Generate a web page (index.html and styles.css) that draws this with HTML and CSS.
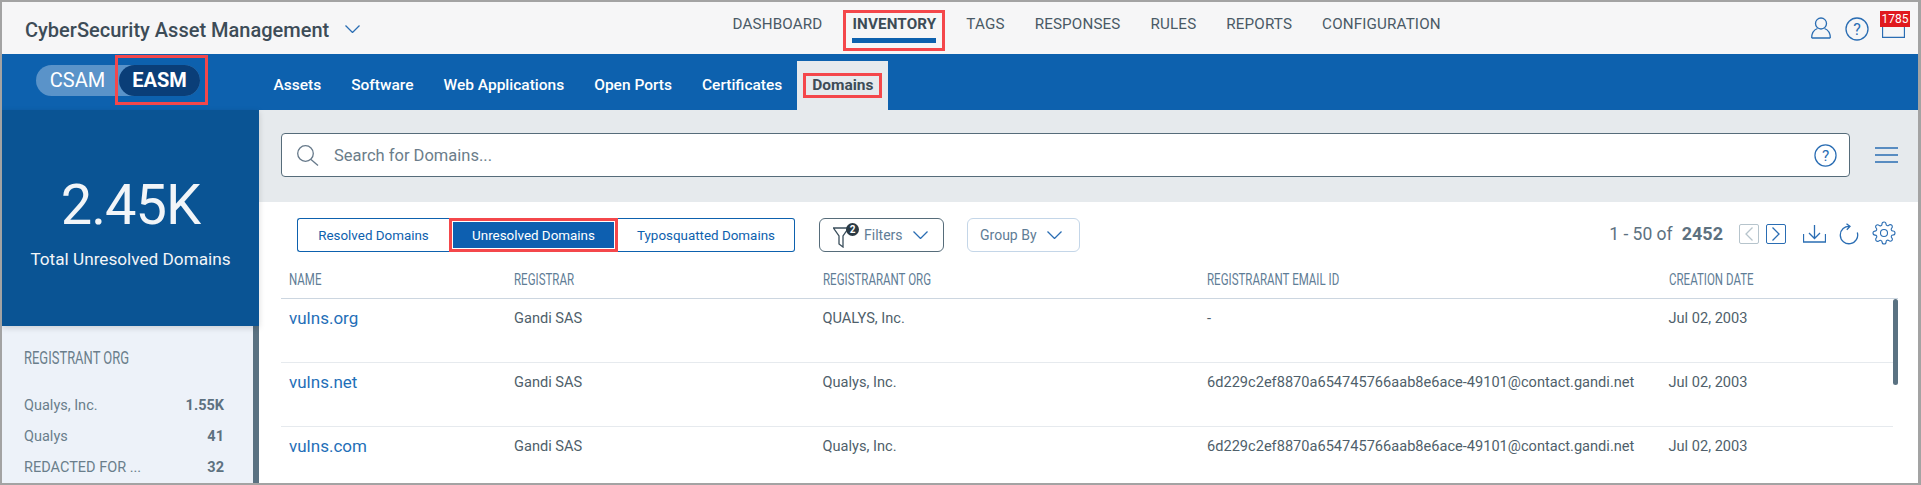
FILE: index.html
```html
<!DOCTYPE html>
<html lang="en">
<head>
<meta charset="utf-8">
<title>CyberSecurity Asset Management</title>
<link rel="stylesheet" href="styles.css">
</head>
<body>
<div class="frame">
  <header class="topbar">
    <div class="brand">
      <span class="brand-name">CyberSecurity Asset Management</span>
      <svg class="brand-chev" width="15" height="8" viewBox="0 0 15 8"><path d="M.5.5l7 7 7-7" class="ic"/></svg>
    </div>
    <nav class="mainnav">
      <a class="mainnav-item">DASHBOARD</a>
      <a class="mainnav-item mainnav-active">INVENTORY</a>
      <a class="mainnav-item">TAGS</a>
      <a class="mainnav-item">RESPONSES</a>
      <a class="mainnav-item">RULES</a>
      <a class="mainnav-item">REPORTS</a>
      <a class="mainnav-item">CONFIGURATION</a>
    </nav>
    <div class="top-icons">
      <svg width="20" height="22" viewBox="0 0 20 22"><circle cx="10" cy="6.5" r="5.5" class="ic"/><path d="M.7 21c0-6 3-8.500 5.800-9.500M19.300 21c0-6-3-8.500-5.800-9.500M.7 21h18.600" class="ic"/></svg>
      <svg width="24" height="24" viewBox="0 0 24 24"><circle cx="12" cy="12" r="11" class="ic"/><text x="12" y="17.500" class="help-mark">?</text></svg>
      <div class="mail">
        <svg width="23" height="18" viewBox="0 0 23 18"><path d="M.5.5h22v17H.5zM10 6h2" class="ic"/></svg>
        <span class="mail-badge">1785</span>
      </div>
    </div>
  </header>

  <div class="subbar">
    <div class="toggle-wrap">
      <div class="toggle">
        <span class="toggle-off">CSAM</span>
        <span class="toggle-on">EASM</span>
      </div>
    </div>
    <nav class="subnav">
      <a class="subnav-item">Assets</a>
      <a class="subnav-item">Software</a>
      <a class="subnav-item">Web Applications</a>
      <a class="subnav-item">Open Ports</a>
      <a class="subnav-item">Certificates</a>
      <a class="subnav-tab"><span class="subnav-tab-label">Domains</span></a>
    </nav>
  </div>

  <div class="main">
    <aside class="side">
      <div class="total">
        <div class="total-num">2.45K</div>
        <div class="total-label">Total Unresolved Domains</div>
      </div>
      <div class="facet">
        <div class="facet-body">
          <div class="facet-title"><span class="cond">REGISTRANT ORG</span></div>
          <div class="facet-row"><span>Qualys, Inc.</span><b>1.55K</b></div>
          <div class="facet-row"><span>Qualys</span><b>41</b></div>
          <div class="facet-row"><span>REDACTED FOR ...</span><b>32</b></div>
        </div>
        <div class="facet-scroll"></div>
      </div>
    </aside>

    <section class="content">
      <div class="search-band">
        <div class="search">
          <svg width="22" height="21" viewBox="0 0 22 21"><circle cx="8.500" cy="8.500" r="7.800" class="ic-grey"/><path d="M14 14.500l7 6" class="ic-grey"/></svg>
          <span class="search-text">Search for Domains...</span>
          <svg class="search-help" width="23" height="23" viewBox="0 0 24 24"><circle cx="12" cy="12" r="11" class="ic"/><text x="12" y="17.500" class="help-mark">?</text></svg>
        </div>
        <svg class="burger" width="23" height="16" viewBox="0 0 23 16"><path d="M0 1h23M0 8h23M0 15h23" class="ic"/></svg>
      </div>

      <div class="toolbar">
        <div class="seg">
          <span class="seg-item seg-first">Resolved Domains</span>
          <span class="seg-item seg-active">Unresolved Domains</span>
          <span class="seg-item seg-last">Typosquatted Domains</span>
        </div>
        <button class="btn btn-filter">
          <span class="funnel">
            <svg width="16" height="21" viewBox="0 0 16 21"><path d="M.5 1h15L10 9v11l-4-3V9z" class="ic-dark"/></svg>
            <span class="funnel-badge">2</span>
          </span>
          <span>Filters</span>
          <svg width="15" height="8" viewBox="0 0 15 8"><path d="M.5.5l7 7 7-7" class="ic"/></svg>
        </button>
        <button class="btn btn-group">
          <span>Group By</span>
          <svg width="15" height="8" viewBox="0 0 15 8"><path d="M.5.5l7 7 7-7" class="ic"/></svg>
        </button>
        <div class="pager">
          <span class="pager-text">1 - 50 of</span>
          <b class="pager-total">2452</b>
          <span class="page-btn page-off"><svg width="8" height="14" viewBox="0 0 8 14"><path d="M7.500.5L1 7l6.500 6.500" class="ic-off"/></svg></span>
          <span class="page-btn page-on"><svg width="8" height="14" viewBox="0 0 8 14"><path d="M.5.5L7 7 .5 13.500" class="ic"/></svg></span>
          <svg class="tool-down" width="23" height="18" viewBox="0 0 23 18"><path d="M11.500 0v13M6 8l5.500 5.500L17 8M.5 9v8h22V9" class="ic"/></svg>
          <svg class="tool-refresh" width="20" height="22" viewBox="0 0 20 22"><path d="M18.300 9.500A8.700 8.700 0 1 1 11 3.400M7.500 .7L11 3.400 7.800 6.700" class="ic"/></svg>
          <svg class="tool-gear" width="24" height="24" viewBox="0 0 24 24"><circle cx="12" cy="12" r="3.500" class="ic-thin"/><path d="M19.400 15a1.650 1.650 0 0 0 .33 1.820l.06.06a2 2 0 0 1 0 2.830 2 2 0 0 1-2.830 0l-.06-.06a1.650 1.650 0 0 0-1.820-.33 1.650 1.650 0 0 0-1 1.510V21a2 2 0 0 1-2 2 2 2 0 0 1-2-2v-.09A1.650 1.650 0 0 0 9 19.400a1.650 1.650 0 0 0-1.820.33l-.06.06a2 2 0 0 1-2.830 0 2 2 0 0 1 0-2.830l.06-.06a1.650 1.650 0 0 0 .33-1.820 1.650 1.650 0 0 0-1.510-1H3a2 2 0 0 1-2-2 2 2 0 0 1 2-2h.09A1.650 1.650 0 0 0 4.600 9a1.650 1.650 0 0 0-.33-1.820l-.06-.06a2 2 0 0 1 0-2.830 2 2 0 0 1 2.830 0l.06.06a1.650 1.650 0 0 0 1.820.33H9a1.650 1.650 0 0 0 1-1.510V3a2 2 0 0 1 2-2 2 2 0 0 1 2 2v.09a1.650 1.650 0 0 0 1 1.510 1.650 1.650 0 0 0 1.820-.33l.06-.06a2 2 0 0 1 2.830 0 2 2 0 0 1 0 2.830l-.06.06a1.650 1.650 0 0 0-.33 1.820V9a1.650 1.650 0 0 0 1.510 1H21a2 2 0 0 1 2 2 2 2 0 0 1-2 2h-.09a1.650 1.650 0 0 0-1.510 1z" class="ic-thin"/></svg>
        </div>
      </div>

      <div class="table">
        <div class="thead">
          <span class="cond">NAME</span><span class="cond">REGISTRAR</span><span class="cond">REGISTRARANT ORG</span><span class="cond">REGISTRARANT EMAIL ID</span><span class="cond">CREATION DATE</span>
        </div>
        <div class="tbody">
          <div class="rows">
            <div class="row"><a class="link">vulns.org</a><span>Gandi SAS</span><span>QUALYS, Inc.</span><span>-</span><span>Jul 02, 2003</span></div>
            <div class="row"><a class="link">vulns.net</a><span>Gandi SAS</span><span>Qualys, Inc.</span><span>6d229c2ef8870a654745766aab8e6ace-49101@contact.gandi.net</span><span>Jul 02, 2003</span></div>
            <div class="row"><a class="link">vulns.com</a><span>Gandi SAS</span><span>Qualys, Inc.</span><span>6d229c2ef8870a654745766aab8e6ace-49101@contact.gandi.net</span><span>Jul 02, 2003</span></div>
          </div>
          <div class="thumb"></div>
        </div>
      </div>
    </section>
  </div>
</div>
</body>
</html>
```
FILE: styles.css
```css
*, *::before, *::after { box-sizing: border-box; }
html, body { margin: 0; padding: 0; }
body { font-family: Roboto, "Liberation Sans", sans-serif; color: #4a5a66; background: #fff; }

.frame {
  width: 1921px; height: 485px; overflow: hidden;
  border: solid #a3a3a3; border-width: 2px 3px 2px 2px;
  display: flex; flex-direction: column;
  background: #fff;
}

/* no condensed face is installed, so the narrow caption font is made by squeezing Roboto */
.cond { display: inline-block; transform: scaleX(.72); transform-origin: left center; white-space: nowrap; }

.ic, .ic-grey, .ic-dark, .ic-off, .ic-thin { fill: none; stroke-width: 1.3; }
.ic { stroke: #2a6db3; }
.ic-thin { stroke: #2a6db3; stroke-width: 1.1; }
.ic-grey { stroke: #66798a; }
.ic-dark { stroke: #3b4f5c; }
.ic-off { stroke: #b6c4cc; }
.help-mark { font: 16px Roboto, sans-serif; text-anchor: middle; fill: #2a6db3; }

/* top bar */
.topbar { height: 52px; flex: none; background: #f6f6f7; display: flex; align-items: stretch; }
.brand { width: 730.500px; padding: 16px 0 0 23px; display: flex; gap: 16px; flex: none; }
.brand-name { font-size: 20px; font-weight: 500; line-height: 24px; color: #3d4c57; white-space: nowrap; }
.brand-chev { margin-top: 7px; }
.mainnav { display: flex; align-items: flex-start; gap: 30px; font-size: 15.200px; flex: none; }
.mainnav-item { color: #4a5a66; padding-top: 13px; line-height: 18px; letter-spacing: .15px; }
.mainnav-active {
  font-weight: 700; color: #3c4b56;
  margin: 8px -9px 0; padding: 5px 9px 0; height: 41px;
  outline: 3px solid #f4474b; outline-offset: -3px;
}
.mainnav-active::after { content: ""; display: block; height: 5px; background: #0d61ae; margin-top: 5px; }
.top-icons { margin-left: auto; width: 107px; padding-top: 15px; display: flex; align-items: flex-start; gap: 14px; }
.mail { position: relative; margin-top: 3px; margin-left: -1px; }
.mail svg { display: block; }
.mail-badge {
  position: absolute; left: -2px; top: -9px; width: 30px; height: 16px;
  background: #e0191e; color: #fff; font-size: 12px; line-height: 16px; text-align: center;
}

/* sub bar */
.subbar { height: 56px; flex: none; background: #0d61ae; display: flex; }
.toggle-wrap { width: 271.500px; flex: none; padding: 11px 0 0 34px; }
.toggle { width: 164px; height: 31px; border-radius: 16px; background: #5a93c9; display: flex; color: #fff; font-size: 20px; }
.toggle-off { width: 83px; text-align: center; line-height: 31px; }
.toggle-on {
  width: 81px; height: 31px; line-height: 31px; text-align: center; font-weight: 700;
  background: #0a3e78; border-radius: 16px; position: relative;
}
.toggle-on::after { content: ""; position: absolute; left: -4px; top: -10px; width: 93px; height: 50px; border: 3px solid #f4474b; }
.subnav { display: flex; font-size: 15.500px; font-weight: 500; color: #fff; align-items: stretch; }
.subnav-item { padding: 0 15px; line-height: 62px; white-space: nowrap; }
.subnav-item:first-child { padding-left: 0; }
.subnav-tab { margin-top: 7px; width: 91px; background: #e6eaed; display: flex; align-items: center; justify-content: center; }
.subnav-tab-label { color: #3d4c57; font-weight: 700; width: 79px; height: 25px; line-height: 25px; text-align: center; outline: 3px solid #f4474b; outline-offset: -3px; }

/* main */
.main { flex: 1; display: flex; min-height: 0; }
.side { width: 257px; flex: none; display: flex; flex-direction: column; }
.total { height: 216px; flex: none; background: #0a5494; color: #fff; text-align: center; padding-top: 63px; box-shadow: 0 2px 6px rgba(0,0,0,.15); position: relative; }
.total-num { font-size: 56px; font-weight: 400; letter-spacing: -1px; line-height: 64px; color: #f2f5f8; }
.total-label { font-size: 17.200px; font-weight: 400; margin-top: 12px; line-height: 20px; color: #f2f5f8; }
.facet { flex: 1; background: #edf2f9; display: flex; }
.facet-body { flex: 1; padding: 20px 29px 0 22px; }
.facet-title { font-size: 18px; color: #6a7e8b; line-height: 24px; margin-bottom: 20px; white-space: nowrap; }
.facet-row { display: flex; justify-content: space-between; font-size: 14.500px; line-height: 31px; height: 31px; color: #6a7e8b; white-space: nowrap; }
.facet-row b { font-weight: 700; color: #5d7180; }
.facet-scroll { width: 6px; background: #5a7282; flex: none; }

.content { flex: 1; min-width: 0; display: flex; flex-direction: column; }
.search-band { height: 92px; flex: none; background: #e6eaed; padding: 23px 0 0 22px; display: flex; align-items: flex-start; gap: 25px; }
.search {
  width: 1569px; height: 44px; background: #fff; border: 1px solid #566c7a; border-radius: 4px;
  display: flex; align-items: center; padding: 0 12px 0 15px;
}
.search-text { margin-left: 15px; font-size: 16.500px; color: #6b7d8a; }
.search-help { margin-left: auto; }
.burger { margin-top: 14px; }

.toolbar { height: 50px; flex: none; display: flex; align-items: flex-start; padding: 16px 22px 0 38px; }
.seg { display: flex; height: 34px; font-size: 13.400px; color: #0d61ae; width: 498px; }
.seg-item { display: flex; align-items: center; justify-content: center; border: 1px solid #0d61ae; border-width: 1px 0; }
.seg-first { width: 152px; border-left-width: 1px; border-radius: 3px 0 0 3px; }
.seg-active { width: 169px; background: #0d5fb0; color: #fff; border: 3px solid #f4474b; box-shadow: inset 0 0 0 1px #fff; }
.seg-last { flex: 1; border-right-width: 1px; border-radius: 0 3px 3px 0; }
.btn { height: 34px; font: inherit; font-size: 14px; color: #5f7d96; background: #fff; border-radius: 6px; display: flex; align-items: center; padding: 0; }
.btn-filter { width: 125px; margin-left: 24px; border: 1px solid #566c7a; padding-left: 13px; gap: 10px; }
.btn-group { width: 113px; margin-left: 23px; border: 1px solid #c4d6e8; padding-left: 12px; gap: 10px; }
.funnel { position: relative; display: block; width: 21px; height: 21px; margin-top: 4px; }
.funnel svg { display: block; }
.funnel-badge {
  position: absolute; left: 13px; top: -4px; width: 13px; height: 13px; border-radius: 50%;
  background: #2b3a44; color: #fff; font-size: 10px; font-weight: 700; line-height: 13px; text-align: center;
}
.pager { margin-left: auto; display: flex; align-items: center; height: 31px; color: #5d7180; }
.pager-text { font-size: 17.500px; }
.pager-total { font-size: 18px; margin-left: 9px; font-weight: 700; }
.page-btn { width: 20px; height: 20px; border: 1px solid; border-radius: 2px; display: flex; align-items: center; justify-content: center; }
.page-off { margin-left: 16px; border-color: #b6c4cc; }
.page-on { margin-left: 7px; border-color: #2a6db3; }
.tool-down { margin-left: 17px; }
.tool-refresh { margin-left: 13px; }
.tool-gear { margin-left: 13px; margin-top: -2px; }

.table { flex: 1; min-height: 0; padding-left: 22px; }
.thead {
  display: grid; grid-template-columns: 225px 308.500px 384.500px 461.500px 1fr;
  height: 47px; width: 1617px; padding: 8px 0 0 8px; align-items: center;
  border-bottom: 1px solid #ccd6e0;
  font-size: 16px; color: #5f7d96;
  white-space: nowrap;
}
.tbody { display: flex; width: 1617px; }
.rows { width: 1612px; flex: none; }
.row {
  display: grid; grid-template-columns: 225px 308.500px 384.500px 461.500px 1fr;
  height: 64px; padding: 8px 0 0 8px; border-bottom: 1px solid #e6eaee;
  font-size: 14.600px; line-height: 22px; color: #4f5f6b; white-space: nowrap;
}
.link { font-size: 17px; color: #1f6fb8; line-height: 22px; }
.thumb { width: 5px; height: 86px; border-radius: 3px; background: #5a7282; }
```
